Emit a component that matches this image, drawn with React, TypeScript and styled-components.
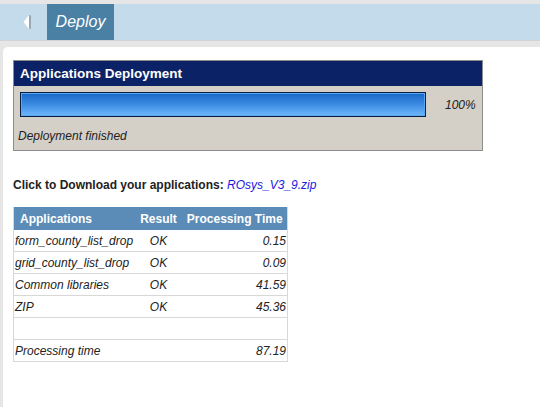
import React from 'react';
import styled, { createGlobalStyle } from 'styled-components';

const GlobalStyle = createGlobalStyle`
  html, body {
    margin: 0;
    padding: 0;
    background: #e6e6e6;
    font-family: "Liberation Sans", Arial, sans-serif;
    font-size: 12px;
    color: #222;
  }
`;

const Page = styled.div`
  width: 540px;
  height: 407px;
  display: flex;
  flex-direction: column;
  padding-top: 4px;
  box-sizing: border-box;
  overflow: hidden;
`;

const Toolbar = styled.div`
  height: 36px;
  background: #c3dbea;
  display: flex;
  border-bottom: 1px solid #d0d4d8;
`;

const BackButton = styled.div`
  width: 47px;
  display: flex;
  align-items: center;
  justify-content: center;
  padding-left: 8px;
  box-sizing: border-box;
`;

const Tab = styled.div`
  width: 67px;
  background: #4a80a4;
  color: #fff;
  font-style: italic;
  font-size: 16px;
  display: flex;
  align-items: center;
  justify-content: center;
`;

const Content = styled.div`
  flex: 1;
  margin: 6px 0 0 3px;
  background: #fff;
  border-radius: 5px 0 0 0;
  padding: 13px 10px 0 10px;
`;

const Panel = styled.div`
  width: 468px;
  border: 1px solid #8c8c8c;
  background: #d4d0c8;
`;

const PanelHeader = styled.div`
  background: #0c2266;
  color: #fff;
  font-weight: bold;
  font-size: 13.5px;
  height: 25px;
  display: flex;
  align-items: center;
  padding-left: 6px;
`;

const ProgressRow = styled.div`
  display: flex;
  align-items: center;
  padding: 6px 0 0 6px;
`;

const ProgressTrack = styled.div`
  width: 404px;
  height: 23px;
  border: 1px solid #0a1f40;
  background: #d4d0c8;
`;

const ProgressFill = styled.div`
  height: 100%;
  background: linear-gradient(#1666c6, #3c8ce4 50%, #70b8fa);
  box-shadow: inset 0 0 0 1px #5aa8f4;
`;

const Percent = styled.span`
  font-style: italic;
  margin-left: 19px;
`;

const Status = styled.div`
  font-style: italic;
  padding: 12px 0 7px 4px;
`;

const DownloadLine = styled.div`
  margin-top: 27px;
  font-weight: bold;
  color: #222;
`;

const Link = styled.a`
  font-weight: normal;
  font-style: italic;
  color: #1a1ae0;
  text-decoration: none;
`;

const Table = styled.table`
  margin-top: 15px;
  border-collapse: collapse;
  table-layout: fixed;
  width: 274px;
  border-left: 1px solid #d8d8d8;
  border-right: 1px solid #d8d8d8;
`;

const Th = styled.th<{ $align?: string; $width: number }>`
  background: #5b8cb8;
  color: #fff;
  font-weight: bold;
  height: 23px;
  width: ${(p) => p.$width}px;
  padding: 0 2px 0 ${(p) => (p.$align === 'left' ? '6px' : '2px')};
  text-align: ${(p) => p.$align || 'center'};
  white-space: nowrap;
  box-sizing: border-box;
`;

const Td = styled.td<{ $align?: string }>`
  font-style: italic;
  height: 21px;
  padding: 0 1px;
  border-bottom: 1px solid #d8d8d8;
  text-align: ${(p) => p.$align || 'left'};
  white-space: nowrap;
`;

const rows = [
  { name: 'form_county_list_drop', result: 'OK', time: '0.15' },
  { name: 'grid_county_list_drop', result: 'OK', time: '0.09' },
  { name: 'Common libraries', result: 'OK', time: '41.59' },
  { name: 'ZIP', result: 'OK', time: '45.36' },
  { name: '', result: '', time: '' },
  { name: 'Processing time', result: '', time: '87.19' },
];

const BackArrow = () => (
  <svg width="10" height="16" viewBox="0 0 10 16">
    <path d="M6 1 L0.5 8 L6 15 Z" fill="#fff" />
    <path d="M6 1 L8 1.5 L8 14.5 L6 15 Z" fill="#97a7b3" />
  </svg>
);

const App: React.FC = () => (
  <>
    <GlobalStyle />
    <Page>
      <Toolbar>
        <BackButton>
          <BackArrow />
        </BackButton>
        <Tab>Deploy</Tab>
      </Toolbar>
      <Content>
        <Panel>
          <PanelHeader>Applications Deployment</PanelHeader>
          <ProgressRow>
            <ProgressTrack>
              <ProgressFill style={{ width: '100%' }} />
            </ProgressTrack>
            <Percent>100%</Percent>
          </ProgressRow>
          <Status>Deployment finished</Status>
        </Panel>
        <DownloadLine>
          Click to Download your applications: <Link href="#">ROsys_V3_9.zip</Link>
        </DownloadLine>
        <Table>
          <thead>
            <tr>
              <Th $align="left" $width={121}>Applications</Th>
              <Th $width={48}>Result</Th>
              <Th $width={105}>Processing Time</Th>
            </tr>
          </thead>
          <tbody>
            {rows.map((r, i) => (
              <tr key={i}>
                <Td>{r.name}</Td>
                <Td $align="center">{r.result}</Td>
                <Td $align="right">{r.time}</Td>
              </tr>
            ))}
          </tbody>
        </Table>
      </Content>
    </Page>
  </>
);

export default App;
